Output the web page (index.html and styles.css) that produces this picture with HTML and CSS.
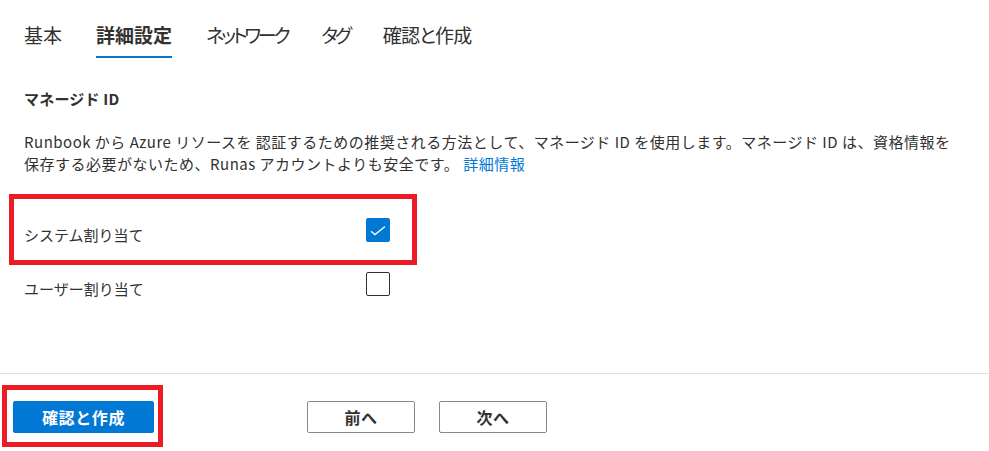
FILE: index.html
```html
<!DOCTYPE html>
<html lang="ja">
<head>
<meta charset="utf-8">
<title>Automation アカウント - 詳細設定</title>
<link rel="stylesheet" href="styles.css">
</head>
<body>
<div class="page">
  <nav class="tabs">
    <span class="tab">基本</span>
    <span class="tab active">詳細設定</span>
    <span class="tab kana">ネットワーク</span>
    <span class="tab kana">タグ</span>
    <span class="tab tight">確認と作成</span>
  </nav>

  <section class="content">
    <h2 class="heading">マネージド ID</h2>
    <p class="desc">Runbook から Azure リソースを 認証するための推奨される方法として、マネージド ID を使用します。マネージド ID は、資格情報を<br>保存する必要がないため、Runas アカウントよりも安全です。 <a class="link" href="#">詳細情報</a></p>

    <div class="rows">
      <div class="row">
        <span class="label">システム割り当て</span>
        <span class="cb checked"><svg viewBox="0 0 24 24" width="24" height="24"><path d="M5 13.2 L9 16.6 L19 8.4" fill="none" stroke="#fff" stroke-width="1.3"/></svg></span>
      </div>
      <div class="row">
        <span class="label">ユーザー割り当て</span>
        <span class="cb"></span>
      </div>
    </div>
  </section>

  <footer class="footer">
    <button class="btn primary">確認と作成</button>
    <button class="btn secondary prev">前へ</button>
    <button class="btn secondary">次へ</button>
  </footer>

  <div class="mark mark-options"></div>
  <div class="mark mark-create"></div>
</div>
</body>
</html>
```

FILE: styles.css
```css
* { box-sizing: border-box; }
html, body { margin: 0; padding: 0; background: #fff; }
body {
  font-family: "Noto Sans CJK JP", "Noto Sans", sans-serif;
  color: #323130;
  font-size: 15px;
}
.page {
  position: relative;
  width: 989px;
  height: 451px;
  display: flex;
  flex-direction: column;
  overflow: hidden;
}
.tabs {
  display: flex;
  gap: 34px;
  padding: 22px 0 0 24px;
}
.tab {
  font-size: 19px;
  line-height: 26px;
  padding-bottom: 8px;
  border-bottom: 2px solid transparent;
  font-feature-settings: "palt";
  color: #323130;
}
.tab.kana { letter-spacing: -3.2px; }
.tab.tight { letter-spacing: -0.8px; }
.tab.active {
  font-weight: 700;
  border-bottom-color: #0078d4;
}
.content {
  padding-left: 24px;
  flex: 1;
}
.heading {
  margin: 31px 0 0;
  font-size: 15px;
  font-weight: 700;
  line-height: 20px;
  letter-spacing: 0.2px;
}
.desc {
  margin: 22px 0 0;
  line-height: 22px;
  font-size: 15px;
  letter-spacing: 0.5px;
  white-space: nowrap;
}
.link { color: #0078d4; text-decoration: none; }
.rows {
  margin-top: 43px;
  display: flex;
  flex-direction: column;
  gap: 25px;
}
.row {
  display: grid;
  grid-template-columns: 342px 24px;
  align-items: start;
}
.label {
  padding-top: 5px;
  line-height: 24px;
}
.cb {
  width: 24px;
  height: 24px;
  border: 1px solid #323130;
  border-radius: 2px;
  display: block;
}
.cb.checked {
  background: #0078d4;
  border-color: #0078d4;
}
.cb svg { display: block; margin: -1px; }
.footer {
  height: 78px;
  border-top: 1px solid #e1dfdd;
  padding: 27px 0 0 13px;
  display: flex;
  align-items: flex-start;
}
.btn {
  font-family: inherit;
  font-size: 16px;
  font-weight: 700;
  height: 32px;
  line-height: 30px;
  padding: 0;
  border-radius: 2px;
  letter-spacing: 0.6px;
  cursor: pointer;
}
.primary {
  width: 141px;
  background: #0078d4;
  border: 1px solid #0078d4;
  color: #fff;
}
.secondary {
  width: 108px;
  background: #fff;
  border: 1px solid #8a8886;
  color: #323130;
  margin-left: 24px;
}
.secondary.prev { margin-left: 153px; }
.mark {
  position: absolute;
  border: 5px solid #ed1c24;
  pointer-events: none;
}
.mark-options { left: 9px; top: 194px; width: 408px; height: 71px; }
.mark-create { left: 2px; top: 385px; width: 161px; height: 62px; }
```
